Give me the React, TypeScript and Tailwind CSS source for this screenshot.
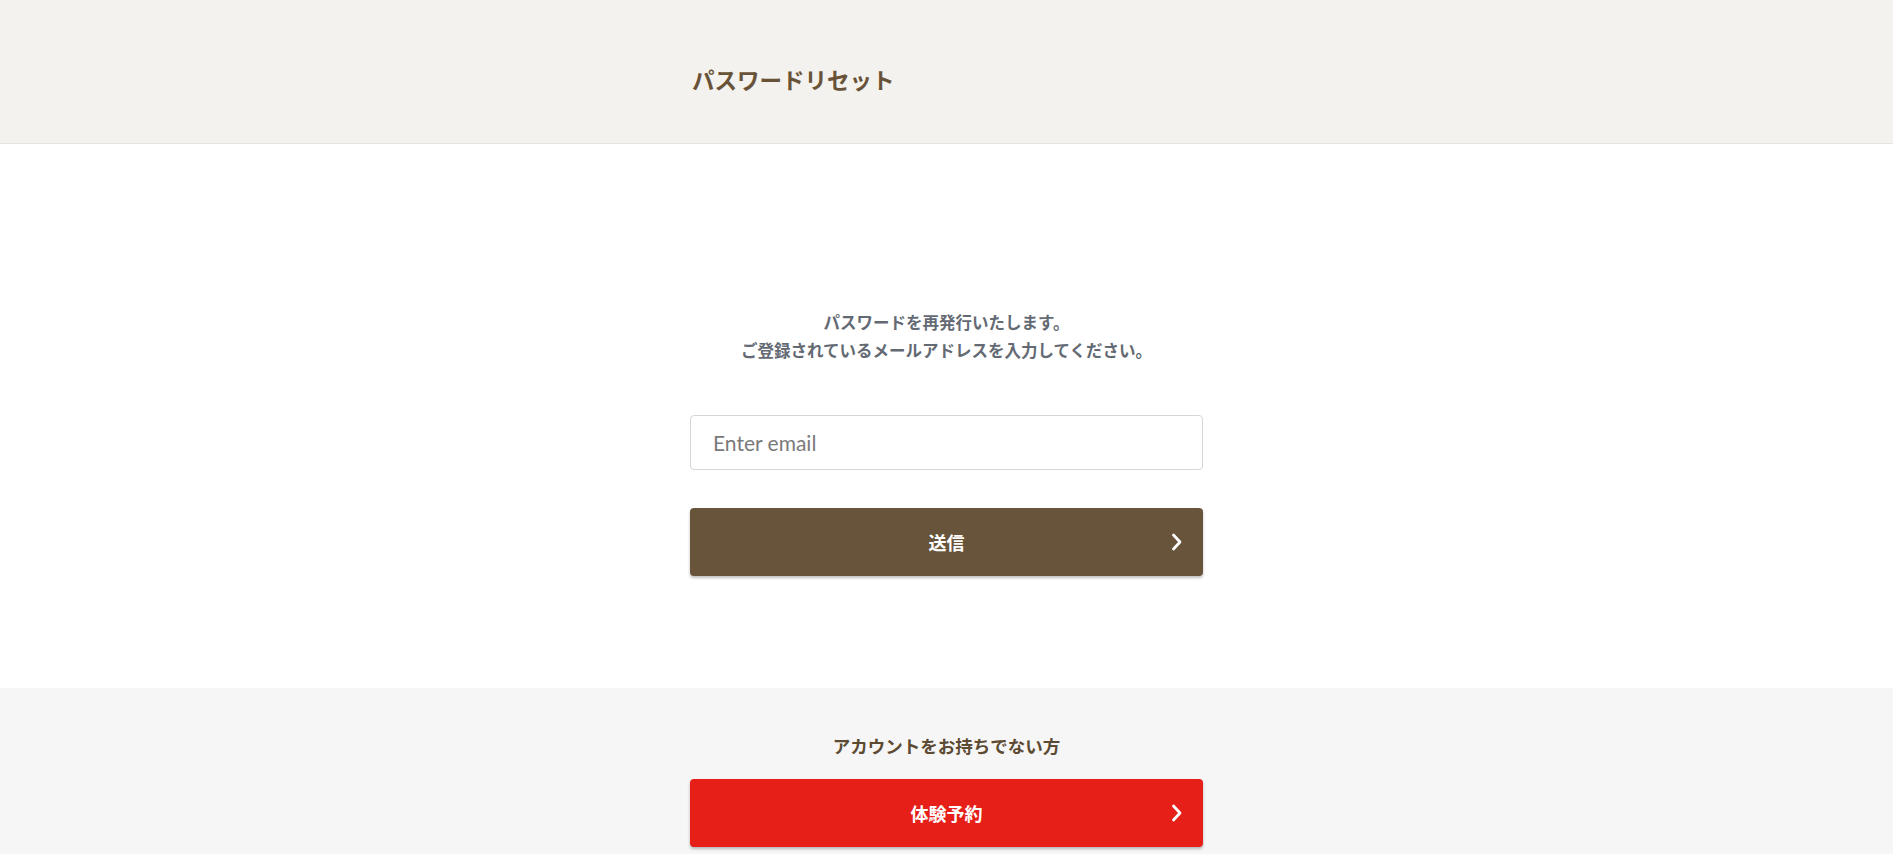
const jp = "font-['Meiryo','Noto_Sans_CJK_JP',sans-serif]";

function Chevron() {
  return (
    <svg
      viewBox="0 0 12 19"
      className="absolute right-[20px] top-1/2 h-[19px] w-[12px] -translate-y-1/2"
      fill="none"
      stroke="currentColor"
      strokeWidth={2.8}
      strokeLinecap="round"
      strokeLinejoin="round"
    >
      <polyline points="2.5,2.5 9,9.5 2.5,16.5" />
    </svg>
  );
}

function ArrowButton({ label, tone }: { label: string; tone: "brown" | "red" }) {
  const bg = tone === "brown" ? "bg-[#68543a] h-[68px]" : "bg-[#e61f19] h-[68px]";
  return (
    <button
      type="button"
      className={`relative flex w-full items-center justify-center rounded-[4px] ${bg} text-white shadow-[0_2px_3px_rgba(0,0,0,0.25)]`}
    >
      <span className={`${jp} text-[18px] font-bold leading-none`}>{label}</span>
      <Chevron />
    </button>
  );
}

export default function App() {
  return (
    <div className={`min-h-[1200px] bg-white ${jp}`}>
      <header className="h-[144px] border-b border-[#e6e4e0] bg-[#f3f2ee]">
        <div className="mx-auto w-[513px] pt-[65px]">
          <h1 className="pl-[2px] text-[22.5px] font-bold leading-[28px] text-[#695338]">パスワードリセット</h1>
        </div>
      </header>

      <main className="pb-[112px] pt-[164px]">
        <div className="mx-auto w-[513px]">
          <p className="text-center text-[16.5px] font-bold leading-[28px] text-[#646a73]">
            パスワードを再発行いたします。
            <br />
            ご登録されているメールアドレスを入力してください。
          </p>
          <input
            type="email"
            placeholder="Enter email"
            className="mt-[51px] h-[55px] w-full rounded-[4px] border border-[#d6d6d6] px-[22px] font-['Lato',sans-serif] text-[21px] text-[#333] outline-none placeholder:text-[#7a7a7a]"
          />
          <div className="mt-[38px]">
            <ArrowButton label="送信" tone="brown" />
          </div>
        </div>
      </main>

      <section className="min-h-[500px] bg-[#f6f6f6] pt-[46px]">
        <div className="mx-auto w-[513px]">
          <p className="text-center text-[17.5px] font-bold leading-[24px] text-[#5c4a33]">アカウントをお持ちでない方</p>
          <div className="mt-[21px]">
            <ArrowButton label="体験予約" tone="red" />
          </div>
        </div>
      </section>
    </div>
  );
}
